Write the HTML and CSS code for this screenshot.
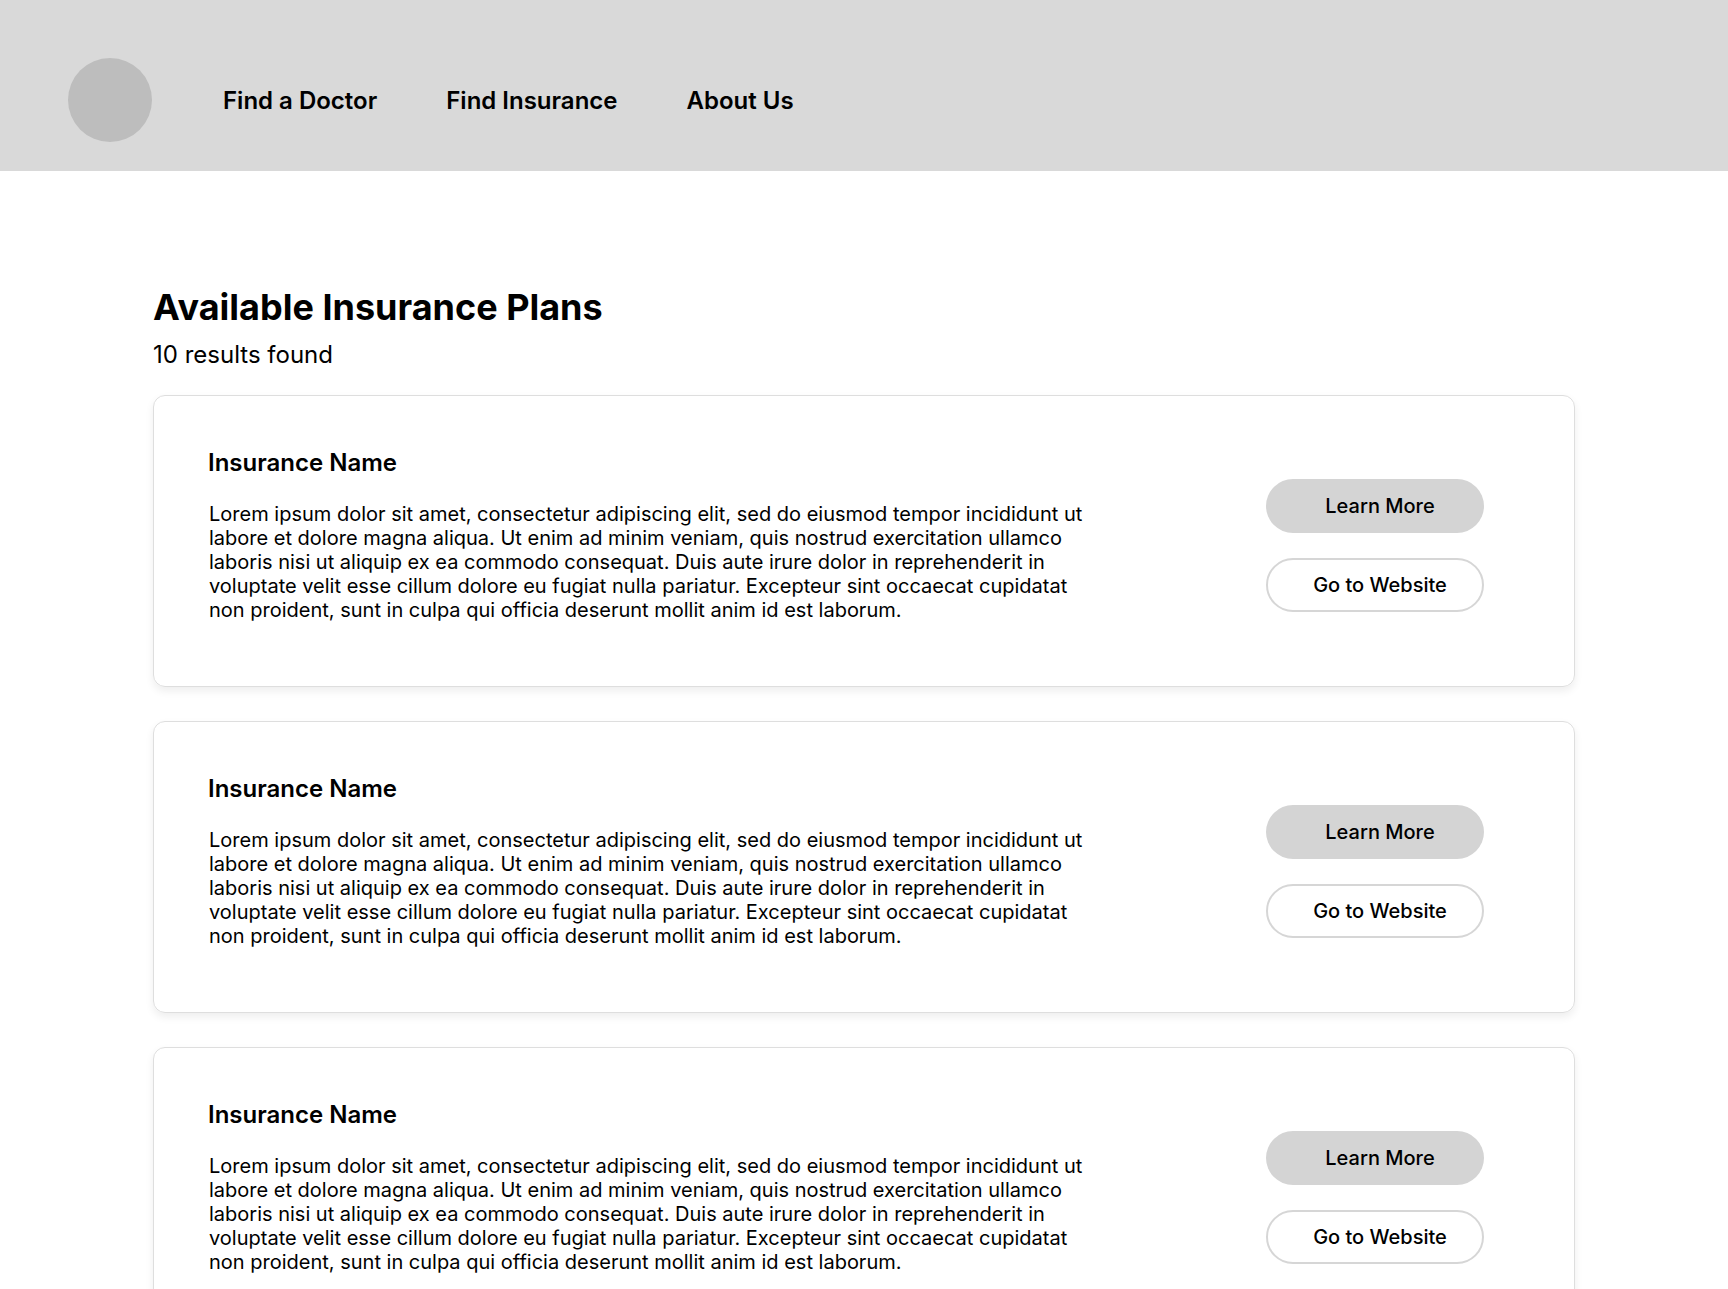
FILE: index.html
```html
<!DOCTYPE html>
<html lang="en">
<head>
<meta charset="utf-8">
<title>Available Insurance Plans</title>
<link rel="stylesheet" href="styles.css">
</head>
<body>
<header class="topbar">
  <div class="logo"></div>
  <nav class="nav">
    <a class="nav-link" href="#">Find a Doctor</a>
    <a class="nav-link" href="#">Find Insurance</a>
    <a class="nav-link" href="#">About Us</a>
  </nav>
</header>
<main class="content">
  <h1 class="title">Available Insurance Plans</h1>
  <p class="count">10 results found</p>
  <section class="card">
    <div class="card-info">
      <h2 class="card-name">Insurance Name</h2>
      <p class="card-text">Lorem ipsum dolor sit amet, consectetur adipiscing elit, sed do eiusmod tempor incididunt ut labore et dolore magna aliqua. Ut enim ad minim veniam, quis nostrud exercitation ullamco laboris nisi ut aliquip ex ea commodo consequat. Duis aute irure dolor in reprehenderit in voluptate velit esse cillum dolore eu fugiat nulla pariatur. Excepteur sint occaecat cupidatat non proident, sunt in culpa qui officia deserunt mollit anim id est laborum.</p>
    </div>
    <div class="card-actions">
      <a class="btn btn-fill" href="#">Learn More</a>
      <a class="btn btn-outline" href="#">Go to Website</a>
    </div>
  </section>
  <section class="card">
    <div class="card-info">
      <h2 class="card-name">Insurance Name</h2>
      <p class="card-text">Lorem ipsum dolor sit amet, consectetur adipiscing elit, sed do eiusmod tempor incididunt ut labore et dolore magna aliqua. Ut enim ad minim veniam, quis nostrud exercitation ullamco laboris nisi ut aliquip ex ea commodo consequat. Duis aute irure dolor in reprehenderit in voluptate velit esse cillum dolore eu fugiat nulla pariatur. Excepteur sint occaecat cupidatat non proident, sunt in culpa qui officia deserunt mollit anim id est laborum.</p>
    </div>
    <div class="card-actions">
      <a class="btn btn-fill" href="#">Learn More</a>
      <a class="btn btn-outline" href="#">Go to Website</a>
    </div>
  </section>
  <section class="card">
    <div class="card-info">
      <h2 class="card-name">Insurance Name</h2>
      <p class="card-text">Lorem ipsum dolor sit amet, consectetur adipiscing elit, sed do eiusmod tempor incididunt ut labore et dolore magna aliqua. Ut enim ad minim veniam, quis nostrud exercitation ullamco laboris nisi ut aliquip ex ea commodo consequat. Duis aute irure dolor in reprehenderit in voluptate velit esse cillum dolore eu fugiat nulla pariatur. Excepteur sint occaecat cupidatat non proident, sunt in culpa qui officia deserunt mollit anim id est laborum.</p>
    </div>
    <div class="card-actions">
      <a class="btn btn-fill" href="#">Learn More</a>
      <a class="btn btn-outline" href="#">Go to Website</a>
    </div>
  </section>
</main>
</body>
</html>
```
FILE: styles.css
```css
* { box-sizing: border-box; }
html, body { margin: 0; padding: 0; }
body {
  font-family: Inter, "Noto Sans", "Liberation Sans", sans-serif;
  color: #000;
  background: #fff;
}
.topbar {
  height: 171px;
  background: #d9d9d9;
  display: flex;
  align-items: center;
  padding-left: 68px;
  padding-top: 29px;
}
.logo {
  width: 84px;
  height: 84px;
  border-radius: 50%;
  background: #bdbdbd;
  flex: none;
  margin-top: -1px;
}
.nav {
  display: flex;
  gap: 69px;
  margin-left: 71px;
}
.nav-link {
  font-size: 24px;
  font-weight: 600;
  color: #000;
  text-decoration: none;
}
.content {
  width: 1422px;
  margin: 0 auto;
  padding-top: 114px;
}
.title {
  margin: 0;
  font-size: 36px;
  line-height: 44px;
  font-weight: 700;
}
.count {
  margin: 11px 0 0;
  font-size: 24px;
  line-height: 29px;
  font-weight: 400;
}
.card {
  margin-top: 26px;
  min-height: 292px;
  border: 1px solid #dedede;
  border-radius: 12px;
  box-shadow: 0 4px 8px rgba(0, 0, 0, 0.07);
  display: flex;
  align-items: center;
  justify-content: space-between;
  padding: 0 90px 0 54px;
}
.card + .card { margin-top: 34px; }
.card-info {
  width: 900px;
  padding-bottom: 12px;
}
.card-name {
  margin: 0;
  font-size: 24px;
  line-height: 29px;
  font-weight: 600;
}
.card-text {
  margin: 25px 0 0 1px;
  width: 884px;
  font-size: 20px;
  line-height: 24px;
}
.card-actions {
  display: flex;
  flex-direction: column;
  gap: 25px;
  padding-top: 8px;
}
.btn {
  width: 218px;
  height: 54px;
  border-radius: 27px;
  display: flex;
  align-items: center;
  justify-content: center;
  padding-left: 10px;
  font-size: 20px;
  font-weight: 500;
  color: #000;
  text-decoration: none;
}
.btn-fill { background: #d4d4d4; }
.btn-outline {
  background: #fff;
  border: 2px solid #d6d6d6;
}
```
